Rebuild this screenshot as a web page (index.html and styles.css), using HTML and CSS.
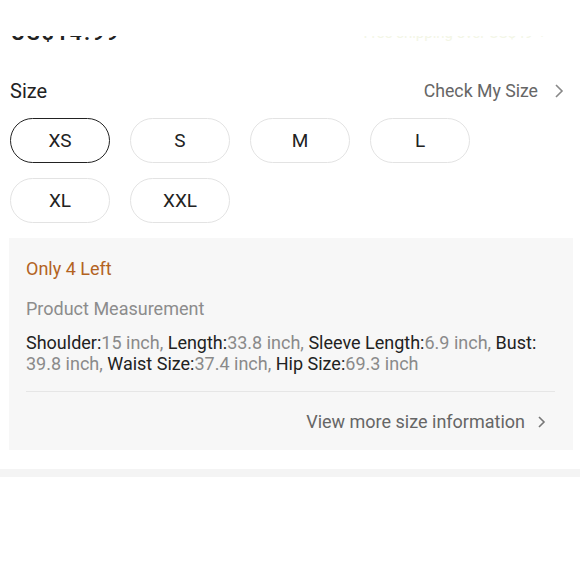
FILE: index.html
```html
<!DOCTYPE html>
<html lang="en">
<head>
    <meta charset="UTF-8">
    <title>Size</title>
    <link rel="stylesheet" href="styles.css">
</head>
<body>
<div class="page">
    <!-- price row, mostly hidden under the header -->
    <div class="price_peek">
        <div class="price_clip">
            <span class="price">US$14.99</span>
            <span class="price_note">Free shipping over US$49 &nbsp;›</span>
        </div>
    </div>

    <div class="size_head">
        <span class="size_title">Size</span>
        <a class="size_check" href="#">Check My Size
            <svg class="chev" width="10" height="16" viewBox="0 0 10 16">
                <polyline points="2,2 8,8 2,14" fill="none" stroke="#888" stroke-width="1.6"/>
            </svg>
        </a>
    </div>

    <div class="size_list">
        <button class="size_btn active">XS</button>
        <button class="size_btn">S</button>
        <button class="size_btn">M</button>
        <button class="size_btn">L</button>
        <button class="size_btn">XL</button>
        <button class="size_btn">XXL</button>
    </div>

    <div class="stock_box">
        <div class="stock_left">Only 4 Left</div>
        <div class="measure_title">Product Measurement</div>
        <p class="measure_text">
            <b>Shoulder:</b>15 inch, <b>Length:</b>33.8 inch, <b>Sleeve Length:</b>6.9 inch, <b>Bust:</b>
            39.8 inch, <b>Waist Size:</b>37.4 inch, <b>Hip Size:</b>69.3 inch
        </p>
        <a class="more_info" href="#">View more size information
            <svg class="chev" width="10" height="14" viewBox="0 0 10 14">
                <polyline points="2,2 7,7 2,12" fill="none" stroke="#777" stroke-width="1.6"/>
            </svg>
        </a>
    </div>

    <div class="gap_band"></div>
</div>
</body>
</html>
```

FILE: styles.css
```css
body {
    margin: 0;
    background-color: #fff;
    font-family: Roboto, "Liberation Sans", sans-serif;
    color: #222;
}

.page {
    width: 580px;
}

.price_peek {
    padding-top: 36px;
}

.price_clip {
    height: 6px;
    overflow: hidden;
    display: flex;
    justify-content: space-between;
    padding: 0 35px 0 11px;
}

.price {
    display: block;
    margin-top: -13px;
    font-size: 21px;
    line-height: 20px;
    font-weight: bold;
    letter-spacing: 2px;
    color: #222;
}

.price_note {
    display: block;
    margin-top: -12px;
    font-size: 15px;
    line-height: 18px;
    color: #f3f6e6;
}

.size_head {
    display: flex;
    justify-content: space-between;
    align-items: center;
    margin-top: 37px;
    padding: 0 16px 0 10px;
    height: 24px;
}

.size_title {
    font-size: 20px;
    line-height: 24px;
}

.size_check {
    display: flex;
    align-items: center;
    gap: 16px;
    font-size: 17.7px;
    color: #666;
    text-decoration: none;
}

.size_list {
    display: grid;
    grid-template-columns: repeat(4, 100px);
    column-gap: 20px;
    row-gap: 15px;
    padding: 15px 10px 0;
}

.size_btn {
    height: 45px;
    border: 1px solid #e3e3e3;
    border-radius: 23px;
    background-color: #fff;
    font-family: inherit;
    font-size: 19px;
    color: #222;
    padding: 0;
}

.size_btn.active {
    border: 1.5px solid #222;
}

.stock_box {
    margin: 15px 7px 0 9px;
    padding: 21px 18px 18px 17px;
    background-color: #f7f7f7;
}

.stock_left {
    font-size: 18px;
    line-height: 20px;
    color: #b3631f;
}

.measure_title {
    margin-top: 20px;
    font-size: 18px;
    line-height: 20px;
    color: #8c8c8c;
}

.measure_text {
    margin: 13px 0 0;
    padding-bottom: 17px;
    border-bottom: 1px solid #e6e6e6;
    font-size: 18px;
    line-height: 21px;
    color: #8a8a8a;
}

.measure_text b {
    font-weight: normal;
    color: #222;
}

.more_info {
    display: flex;
    justify-content: flex-end;
    align-items: center;
    gap: 12px;
    margin-top: 20px;
    padding-right: 8px;
    font-size: 18px;
    line-height: 20px;
    color: #666;
    text-decoration: none;
}

.gap_band {
    margin-top: 19px;
    height: 8px;
    background-color: #f4f4f4;
}
```
